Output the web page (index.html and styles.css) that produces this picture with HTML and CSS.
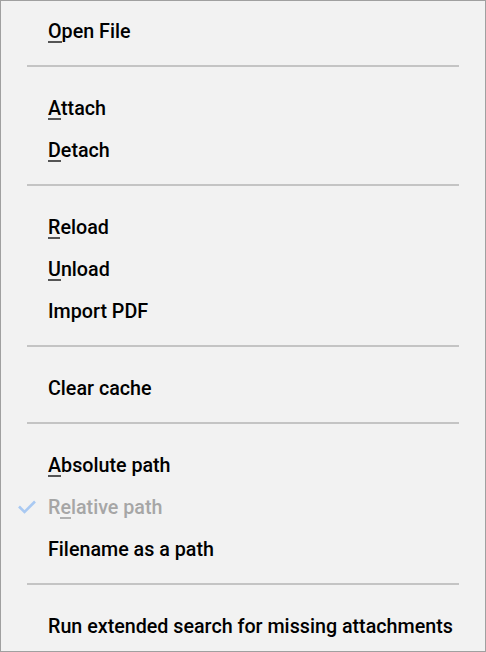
FILE: index.html
```html
<!DOCTYPE html>
<html>
<head>
<meta charset="utf-8">
<link rel="stylesheet" href="styles.css">
</head>
<body>
<div class="menu">
  <div class="item"><span class="label"><u>O</u>pen File</span></div>
  <div class="sep"></div>
  <div class="item"><span class="label"><u>A</u>ttach</span></div>
  <div class="item"><span class="label"><u>D</u>etach</span></div>
  <div class="sep"></div>
  <div class="item"><span class="label"><u>R</u>eload</span></div>
  <div class="item"><span class="label"><u>U</u>nload</span></div>
  <div class="item"><span class="label">Import PDF</span></div>
  <div class="sep"></div>
  <div class="item"><span class="label">Clear cache</span></div>
  <div class="sep"></div>
  <div class="item"><span class="label"><u>A</u>bsolute path</span></div>
  <div class="item disabled">
    <svg class="check" width="20" height="16" viewBox="0 0 20 16"><path d="M2 7.5 L7.5 13 L18 2.5" fill="none" stroke="#a9c9f2" stroke-width="2.6"/></svg>
    <span class="label">R<u>e</u>lative path</span>
  </div>
  <div class="item"><span class="label">Filename as a path</span></div>
  <div class="sep"></div>
  <div class="item"><span class="label">Run extended search for missing attachments</span></div>
</div>
</body>
</html>
```
FILE: styles.css
```css
html, body {
  margin: 0;
  padding: 0;
}
body {
  background: #f2f2f2;
}
.menu {
  box-sizing: border-box;
  width: 486px;
  height: 652px;
  border: 1px solid #a0a0a0;
  background: #f2f2f2;
  padding-top: 9px;
  font-family: Roboto, "Liberation Sans", sans-serif;
  font-weight: 500;
  font-size: 19.7px;
  color: #000;
}
.item {
  position: relative;
  height: 42px;
  display: flex;
  align-items: center;
  padding-left: 47px;
}
.label u {
  text-decoration: none;
  border-bottom: 2px solid #555;
  display: inline-block;
  line-height: 18px;
}
.disabled .label {
  color: #a6a6a6;
}
.disabled .label u {
  border-bottom-color: #b0b0b0;
}
.check {
  position: absolute;
  left: 16px;
  top: 13px;
}
.sep {
  height: 2px;
  background: #c4c4c4;
  margin: 13px 26px 20px 26px;
}
```
